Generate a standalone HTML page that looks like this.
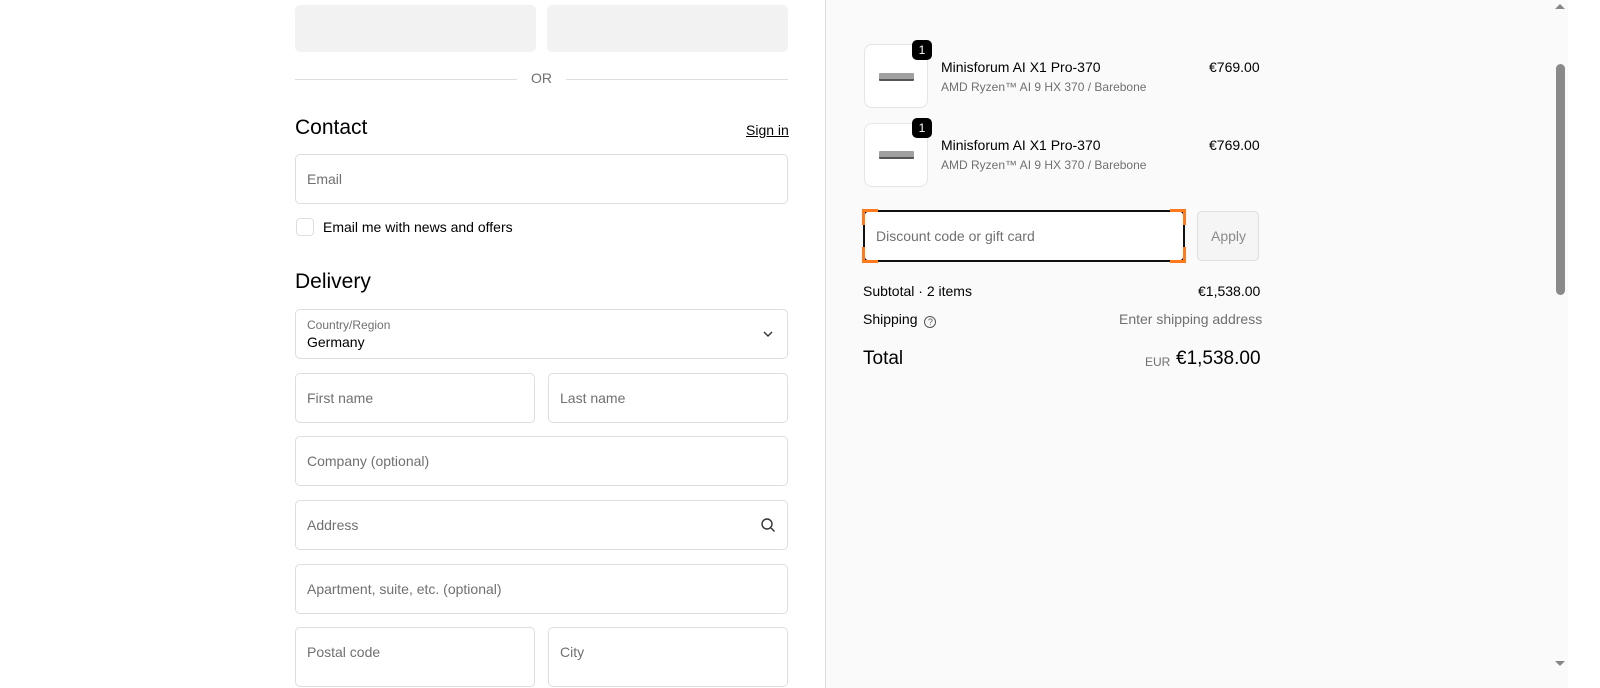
<!DOCTYPE html>
<html><head><meta charset="utf-8"><style>
*{box-sizing:border-box;margin:0;padding:0}
body{width:1600px;height:688px;overflow:hidden;background:#fff;font-family:"Liberation Sans",sans-serif;color:#000;position:relative}
.a{position:absolute}
.in{position:absolute;border:1px solid #dedede;border-radius:5px;background:#fff;font-size:14px;color:#707070;padding-left:11px;display:flex;align-items:center}
.h{font-size:21px}
.sm{font-size:12px;color:#707070}
.c{position:absolute;width:16px;height:16px;border:0 solid #ff7a1a}
</style></head><body>
<div class="a" style="left:295px;top:5px;width:241px;height:47px;background:#f2f2f2;border-radius:5px"></div>
<div class="a" style="left:547px;top:5px;width:241px;height:47px;background:#f2f2f2;border-radius:5px"></div>
<div class="a" style="left:295px;top:79px;width:222px;height:1px;background:#dedede"></div>
<div class="a" style="left:566px;top:79px;width:222px;height:1px;background:#dedede"></div>
<div class="a" style="left:531px;top:70px;font-size:14px;color:#707070">OR</div>
<div class="a h" style="left:295px;top:116px">Contact</div>
<div class="a" style="left:746px;top:122px;font-size:14px;text-decoration:underline">Sign in</div>
<div class="in" style="left:295px;top:154px;width:493px;height:50px">Email</div>
<div class="a" style="left:296px;top:218px;width:18px;height:18px;border:1px solid #dedede;border-radius:4px"></div>
<div class="a" style="left:323px;top:219px;font-size:14px">Email me with news and offers</div>
<div class="a h" style="left:295px;top:270px">Delivery</div>
<div class="in" style="left:295px;top:309px;width:493px;height:50px;display:block;padding-top:8px">
<div class="sm">Country/Region</div><div style="color:#000;font-size:14px;margin-top:2px">Germany</div>
<svg class="a" style="left:466px;top:19px" width="12" height="10" viewBox="0 0 12 10"><path d="M2 3l4 4 4-4" fill="none" stroke="#333" stroke-width="1.4"/></svg></div>
<div class="in" style="left:295px;top:373px;width:240px;height:50px">First name</div>
<div class="in" style="left:548px;top:373px;width:240px;height:50px">Last name</div>
<div class="in" style="left:295px;top:436px;width:493px;height:50px">Company (optional)</div>
<div class="in" style="left:295px;top:500px;width:493px;height:50px">Address
<svg class="a" style="left:464px;top:16px" width="16" height="16" viewBox="0 0 16 16"><circle cx="7" cy="7" r="5" fill="none" stroke="#333" stroke-width="1.4"/><path d="M11 11l3.5 3.5" stroke="#333" stroke-width="1.4"/></svg></div>
<div class="in" style="left:295px;top:564px;width:493px;height:50px">Apartment, suite, etc. (optional)</div>
<div class="in" style="left:295px;top:627px;width:240px;height:60px;padding-bottom:10px">Postal code</div>
<div class="in" style="left:548px;top:627px;width:240px;height:60px;padding-bottom:10px">City</div>

<div class="a" style="left:825px;top:0;width:743px;height:688px;background:#fafafa;border-left:1px solid #dedede"></div>
<div class="a" style="left:1556px;top:64px;width:9px;height:231px;background:#8a8a8a;border-radius:5px"></div>
<div class="a" style="left:1555px;top:4px;width:0;height:0;border:5px solid transparent;border-bottom:5px solid #888;border-top:0"></div>
<div class="a" style="left:1555px;top:661px;width:0;height:0;border:5px solid transparent;border-top:5px solid #888;border-bottom:0"></div>

<div class="a" style="left:864px;top:44px;width:64px;height:64px;background:#fff;border:1px solid #e5e5e5;border-radius:8px"><div class="a" style="left:14px;top:28px;width:35px;height:8px;background:#a0a0a0;border-radius:1px;border-bottom:2px solid #555"></div></div>
<div class="a" style="left:912px;top:40px;width:20px;height:20px;background:#000;color:#fff;border-radius:5px;font-size:12px;text-align:center;line-height:20px">1</div>
<div class="a" style="left:941px;top:59px;font-size:14px">Minisforum AI X1 Pro-370</div>
<div class="a sm" style="left:941px;top:80px">AMD Ryzen™ AI 9 HX 370 / Barebone</div>
<div class="a" style="left:1209px;top:59px;font-size:14px">€769.00</div>
<div class="a" style="left:864px;top:123px;width:64px;height:64px;background:#fff;border:1px solid #e5e5e5;border-radius:8px"><div class="a" style="left:14px;top:27px;width:35px;height:8px;background:#a0a0a0;border-radius:1px;border-bottom:2px solid #555"></div></div>
<div class="a" style="left:912px;top:118px;width:20px;height:20px;background:#000;color:#fff;border-radius:5px;font-size:12px;text-align:center;line-height:20px">1</div>
<div class="a" style="left:941px;top:137px;font-size:14px">Minisforum AI X1 Pro-370</div>
<div class="a sm" style="left:941px;top:158px">AMD Ryzen™ AI 9 HX 370 / Barebone</div>
<div class="a" style="left:1209px;top:137px;font-size:14px">€769.00</div>

<div class="in" style="left:863px;top:210px;width:322px;height:52px;border:2px solid #111;color:#707070">Discount code or gift card</div>
<div class="c" style="left:862px;top:209px;border-left-width:3px;border-top-width:3px"></div>
<div class="c" style="left:1170px;top:209px;border-right-width:3px;border-top-width:3px"></div>
<div class="c" style="left:862px;top:247px;border-left-width:3px;border-bottom-width:3px"></div>
<div class="c" style="left:1170px;top:247px;border-right-width:3px;border-bottom-width:3px"></div>
<div class="in" style="left:1197px;top:211px;width:62px;height:50px;background:#f5f5f5;color:#8a8a8a;padding-left:13px">Apply</div>

<div class="a" style="left:863px;top:283px;font-size:14px">Subtotal · 2 items</div>
<div class="a" style="left:1198px;top:283px;font-size:14px">€1,538.00</div>
<div class="a" style="left:863px;top:311px;font-size:14px">Shipping <span style="display:inline-block;width:12px;height:12px;border:1.3px solid #555;border-radius:50%;font-size:9px;text-align:center;line-height:10px;color:#555;vertical-align:-1px;margin-left:3px">?</span></div>
<div class="a" style="left:1119px;top:311px;font-size:14px;color:#707070">Enter shipping address</div>
<div class="a" style="left:863px;top:348px;font-size:19px">Total</div>
<div class="a" style="left:1145px;top:355px;font-size:12px;color:#707070">EUR</div>
<div class="a" style="left:1176px;top:348px;font-size:19px">€1,538.00</div>
</body></html>
